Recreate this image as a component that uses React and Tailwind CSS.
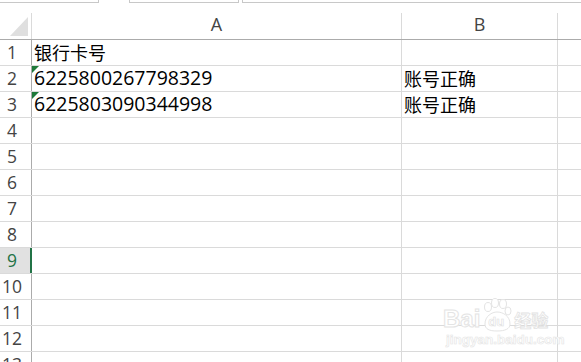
import React from 'react';

const rows = [
  { n: 1, a: '银行卡号', aCjk: true, b: '' },
  { n: 2, a: '6225800267798329', flag: true, b: '账号正确' },
  { n: 3, a: '6225803090344998', flag: true, b: '账号正确' },
  { n: 4 }, { n: 5 }, { n: 6 }, { n: 7 }, { n: 8 },
  { n: 9, active: true },
  { n: 10 }, { n: 11 }, { n: 12 }, { n: 13 },
];

function ErrorFlag() {
  return (
    <svg className="absolute left-0 top-0" width="7" height="7" viewBox="0 0 7 7">
      <polygon points="0,0 7,0 0,7" fill="#1f7a3a" />
    </svg>
  );
}

function Watermark() {
  return (
    <div className="absolute left-[443px] top-[296px] w-[110px] pointer-events-none select-none">
      <div className="flex items-end h-[36px]">
        <span className="font-['Liberation_Sans',sans-serif] font-bold text-[24px] leading-[26px] text-white [-webkit-text-stroke:1px_#e4e4e4]">
          Bai
        </span>
        <div className="relative w-[34px] h-[34px]">
          <svg width="34" height="34" viewBox="0 0 34 34" className="absolute inset-0">
            <g fill="#fff" stroke="#e4e4e4" strokeWidth="1">
              <ellipse cx="8" cy="9" rx="3.5" ry="4.5" />
              <ellipse cx="15" cy="5" rx="3.5" ry="4.5" />
              <ellipse cx="23" cy="6" rx="3.5" ry="4.5" />
              <ellipse cx="28" cy="13" rx="3" ry="4" />
              <path d="M5 26 C5 18 12 14 17 14 C23 14 30 18 30 26 C30 31 25 33 17 33 C9 33 5 31 5 26 Z" />
            </g>
          </svg>
          <span className="absolute left-[8px] top-[17px] font-['Liberation_Sans',sans-serif] font-bold text-[13px] leading-[14px] text-white [-webkit-text-stroke:0.6px_#e0e0e0]">
            du
          </span>
        </div>
        <span className="font-['Noto_Sans_CJK_SC',sans-serif] font-bold text-[17px] leading-[24px] text-white [-webkit-text-stroke:0.8px_#e2e2e2]">
          经验
        </span>
      </div>
      <div className="pl-[3px] font-['Liberation_Sans',sans-serif] font-bold text-[13.5px] leading-[16px] text-white [-webkit-text-stroke:0.6px_#e4e4e4]">
        jingyan.baidu.com
      </div>
    </div>
  );
}

export default function App() {
  return (
    <div className="relative w-[581px] h-[362px] overflow-hidden bg-white font-['Open_Sans',sans-serif] text-black">
      {/* tab strip remnants */}
      <div className="flex h-[13px] items-start">
        <div className="w-[99px] h-[3px] border-b border-r border-[#c8c8c8]" />
        <div className="w-[30px]" />
        <div className="w-[110px] h-[3px] border-b border-x border-[#c8c8c8]" />
        <div className="w-[3px]" />
        <div className="flex-1 h-[3px] border-b border-l border-[#c8c8c8]" />
      </div>

      {/* column headers */}
      <div className="flex h-[27px] border-b border-[#ababab] text-[#444] text-[18px] leading-[23px]">
        <div className="relative w-[32px] border-r border-[#dadada]">
          <svg className="absolute left-[10px] top-[4px]" width="18" height="19" viewBox="0 0 18 19">
            <polygon points="0,19 18,0 18,19" fill="#dfdfdf" />
          </svg>
        </div>
        <div className="w-[370px] border-r border-[#dadada] text-center">A</div>
        <div className="w-[156px] border-r border-[#dadada] text-center">B</div>
        <div className="flex-1" />
      </div>

      {/* rows */}
      {rows.map((r) => (
        <div key={r.n} className="flex h-[26px] border-b border-[#dadada]">
          <div
            className={
              r.active
                ? 'w-[32px] border-r-2 border-[#217346] bg-[#e1e1e1] text-[#217346]'
                : 'w-[32px] border-r border-[#ababab] text-[#444]'
            }
          >
            <div className="w-[24px] text-center text-[17.5px] leading-[25px]">{r.n}</div>
          </div>
          <div className="relative w-[370px] border-r border-[#dadada] pl-[2px]">
            {r.flag && <ErrorFlag />}
            {r.a &&
              (r.aCjk ? (
                <span className="font-['Noto_Sans_CJK_SC',sans-serif] text-[18px] leading-[25px] block">{r.a}</span>
              ) : (
                <span className="text-[19.5px] leading-[23px] block">{r.a}</span>
              ))}
          </div>
          <div className="w-[156px] border-r border-[#dadada] pl-[2px]">
            {r.b && (
              <span className="font-['Noto_Sans_CJK_SC',sans-serif] text-[18px] leading-[24px] block">{r.b}</span>
            )}
          </div>
          <div className="flex-1" />
        </div>
      ))}

      <Watermark />
    </div>
  );
}
